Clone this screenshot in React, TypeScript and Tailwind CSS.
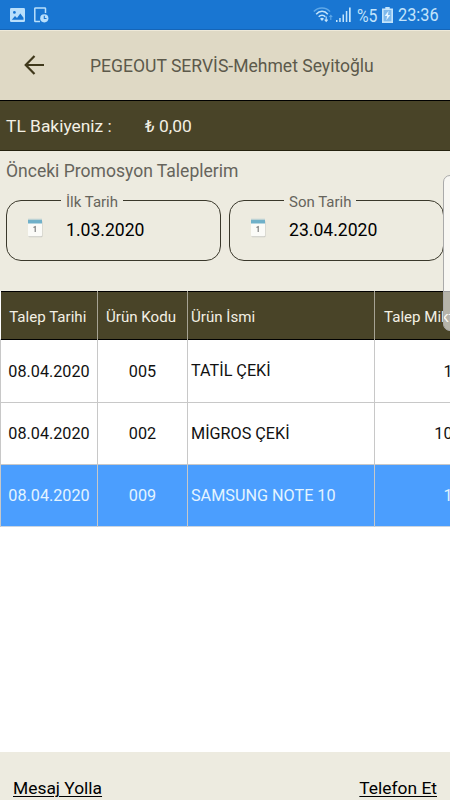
import type { FC } from "react";

interface Request {
  date: string;
  code: string;
  name: string;
  amount: string;
  selected?: boolean;
}

const requests: Request[] = [
  { date: "08.04.2020", code: "005", name: "TATİL ÇEKİ", amount: "1" },
  { date: "08.04.2020", code: "002", name: "MİGROS ÇEKİ", amount: "10" },
  { date: "08.04.2020", code: "009", name: "SAMSUNG NOTE 10", amount: "1", selected: true },
];

const StatusBar: FC = () => (
  <div className="flex h-[30px] shrink-0 items-center border-b border-[#1565b8] bg-[#1976d2] pr-[11px] pl-[10px] text-[#c3e4fb]">
    <svg width="15" height="14" viewBox="0 0 15 14">
      <rect width="15" height="14" rx="1.2" fill="#b9dffb" />
      <path d="M1.8 11.8 5 8l2 2 3.3-4.6 3.2 4.4v2z" fill="#1976d2" />
      <circle cx="4.4" cy="4.4" r="1.4" fill="#1976d2" />
    </svg>
    <svg className="ml-[9px]" width="15" height="16" viewBox="0 0 15 16">
      <path d="M6 14.6H1.5a.7.7 0 0 1-.7-.7V1.6a.7.7 0 0 1 .7-.7h9.3a.7.7 0 0 1 .7.7V6" fill="none" stroke="#b9dffb" strokeWidth="1.5" />
      <circle cx="10.3" cy="11.3" r="4.1" fill="#b9dffb" />
      <path d="M10.3 8.7v2.8h2.2" fill="none" stroke="#1976d2" strokeWidth="1.1" />
    </svg>
    <svg className="ml-auto" width="20" height="16" viewBox="0 0 20 16" fill="none">
      <path d="M.8 4.6C5-.3 13-.3 17 4.6" stroke="#5fa8e8" strokeWidth="1.5" />
      <path d="M3.2 7.2C6.5 3.4 11.7 3.4 14.8 7.2" stroke="#c3e4fb" strokeWidth="1.5" />
      <path d="M5.7 9.8c2-2.2 4.8-2.2 6.6 0" stroke="#c3e4fb" strokeWidth="1.5" />
      <path d="M7 11.7q2-1.8 4 0l-2 2.3z" fill="#c3e4fb" />
      <path d="M13.2 9.5v4.7M11.7 12.6l1.5 1.7 1.5-1.7" stroke="#c3e4fb" strokeWidth="1.1" />
      <path d="M17.8 13V8.5M16.3 10l1.5-1.7 1.5 1.7" stroke="#5fa8e8" strokeWidth="1.1" />
    </svg>
    <svg className="ml-[3px]" width="16" height="16" viewBox="0 0 16 16" fill="#c3e4fb">
      <rect x="0" y="13" width="1.5" height="2" />
      <rect x="3.2" y="11" width="1.5" height="4" />
      <rect x="6.5" y="7.5" width="1.5" height="7.5" />
      <rect x="9.8" y="4" width="1.5" height="11" />
      <rect x="13" y=".5" width="1.7" height="14.5" />
    </svg>
    <span className="mt-[2px] ml-[5px] w-[21px] origin-left scale-x-[0.88] text-[18px] leading-none whitespace-nowrap">%5</span>
    <svg className="ml-1" width="11" height="16" viewBox="0 0 11 16">
      <path d="M3.3 0h4.4v1.5H11V16H0V1.5h3.3z" fill="#c3e4fb" />
      <rect x="1.6" y="3" width="7.8" height="11.3" fill="#7eb9ec" />
      <path d="M6.6 3.8 2.7 9h2.4L4.3 13.2 8.3 7.9H5.9z" fill="#e6f5ff" />
    </svg>
    <span className="mt-[2px] ml-[5px] w-[41px] origin-left scale-x-[0.88] text-[18.5px] leading-none whitespace-nowrap">23:36</span>
  </div>
);

const CalendarIcon: FC = () => (
  <svg width="16" height="20" viewBox="0 0 16 20">
    <rect x="1.5" y="3" width="14" height="16.3" rx="1" fill="#c9c9c3" />
    <rect x="1" y="2" width="14" height="16.3" rx="1" fill="#fbfbf8" />
    <path d="M1 5.5V2h14v3.5z" fill="#6fb0c9" />
    <path d="M1.5 1.5h13" stroke="#8bb9c9" strokeWidth="1.5" strokeDasharray="1 1" />
    <path d="M6.5 9.5 8.2 8.6V14" fill="none" stroke="#777" strokeWidth="1.1" />
  </svg>
);

const DateField: FC<{ label: string; value: string }> = ({ label, value }) => (
  <fieldset className="h-[70px] min-w-0 rounded-[15px] border border-[#3a382b]">
    <legend className="ml-[54px] h-[18px] px-[5px] pt-[2px] text-[15px] leading-[18px] text-[#66645c]">{label}</legend>
    <div className="flex items-center pt-[3px] pl-5">
      <CalendarIcon />
      <span className="mt-[5px] ml-[23px] text-[17.6px] leading-[26px] text-black">{value}</span>
    </div>
  </fieldset>
);

export default function App() {
  return (
    <div className="flex h-[800px] w-[450px] flex-col overflow-hidden bg-white font-['Roboto',sans-serif]">
      <StatusBar />

      <header className="flex h-[70px] shrink-0 items-center border-t border-[#eee9d9] bg-[#dfd9c5] pl-6">
        <svg className="-mt-[2px]" width="21" height="20" viewBox="0 0 21 20" fill="none" stroke="#40391c" strokeWidth="2.2">
          <path d="M20 10H2M10.5 1 1.7 10l8.8 9" />
        </svg>
        <h1 className="mt-[2px] ml-[45px] text-[17.56px] text-[#5c594b]">PEGEOUT SERVİS-Mehmet Seyitoğlu</h1>
      </header>

      <div className="flex h-[51px] shrink-0 items-center border-t border-b border-t-black border-b-[#25220f] bg-[#494428] pt-[2px] pl-[6px] text-[17.4px] text-[#f3f0e4]">
        <span className="w-[139px]">TL Bakiyeniz :</span>
        <span>₺ 0,00</span>
      </div>

      <section className="relative h-[140px] shrink-0 bg-[#edebe0] px-[6px] pt-[8px]">
        <h2 className="text-[17.55px] leading-[25px] text-[#66645c]">Önceki Promosyon Taleplerim</h2>
        <div className="mt-[7px] grid grid-cols-[215px_215px] gap-2">
          <DateField label="İlk Tarih" value="1.03.2020" />
          <DateField label="Son Tarih" value="23.04.2020" />
        </div>
        {/* edge panel handle */}
        <div className="absolute top-6 left-[443px] h-[156px] w-4 rounded-l-[7px] border border-[#aaa] bg-white/60" />
      </section>

      <table className="w-[461px] shrink-0 table-fixed border-collapse">
        <colgroup>
          <col className="w-[97px]" />
          <col className="w-[90px]" />
          <col className="w-[187px]" />
          <col className="w-[87px]" />
        </colgroup>
        <thead>
          <tr className="h-[48px] border-t border-b border-black bg-[#494428] text-[15.1px] text-[#f3f0e4]">
            <th className="border-r border-[#a6a394] p-0 pt-[3px] pr-[2px] font-normal">Talep Tarihi</th>
            <th className="border-r border-[#a6a394] p-0 pt-[3px] pr-[3px] font-normal">Ürün Kodu</th>
            <th className="border-r border-[#a6a394] p-0 pt-[3px] pl-[3px] text-left font-normal">Ürün İsmi</th>
            <th className="p-0 pt-[3px] pl-[9px] text-left font-normal whitespace-nowrap">Talep Miktarı</th>
          </tr>
        </thead>
        <tbody>
          {requests.map((r) => (
            <tr
              key={r.code}
              className={
                r.selected
                  ? "h-[62px] border-b border-[#c9d5e2] bg-[#4b9efe] text-[16.2px] text-[#e3f4ff]"
                  : "h-[62.5px] border-b border-[#c8c8c8] text-[16.2px] text-[#111]"
              }
            >
              <td className="border-r border-l border-[#c8c8c8] p-0 pt-[2px] text-center">{r.date}</td>
              <td className="border-r border-[#c8c8c8] p-0 pt-[2px] text-center">{r.code}</td>
              <td className="border-r border-[#c8c8c8] p-0 pt-px pl-[3px]">{r.name}</td>
              <td className="p-0 pt-[2px] pr-[9px] text-right">{r.amount}</td>
            </tr>
          ))}
        </tbody>
      </table>

      <footer className="mt-auto flex h-[48px] shrink-0 justify-between bg-[#edebe0] px-[13px] pt-[25px] text-[17.4px] leading-[22px] text-black">
        <a className="underline decoration-1 underline-offset-2">Mesaj Yolla</a>
        <a className="underline decoration-1 underline-offset-2">Telefon Et</a>
      </footer>
    </div>
  );
}
